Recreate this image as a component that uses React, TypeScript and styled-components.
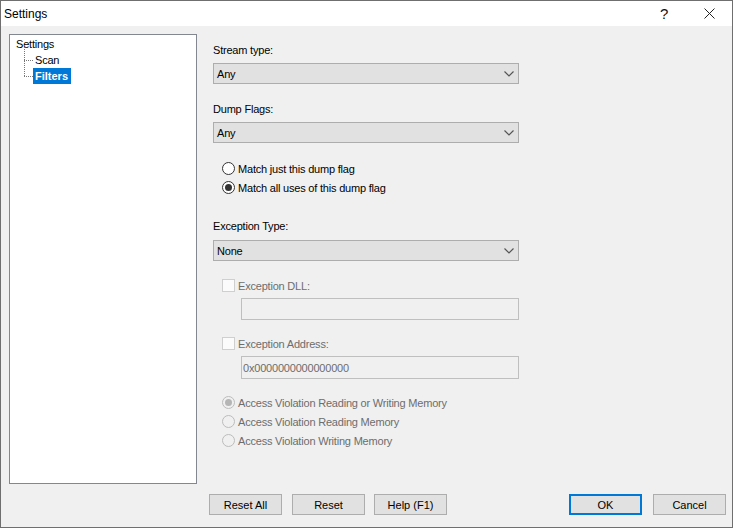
import React from "react";
import styled, { createGlobalStyle } from "styled-components";

const Global = createGlobalStyle`
  html, body { margin: 0; padding: 0; background: #f0f0f0; }
  * { box-sizing: border-box; }
`;

const Window = styled.div`
  width: 733px;
  height: 528px;
  display: flex;
  flex-direction: column;
  background: #f0f0f0;
  border: 1px solid #6f6f6f;
  font-family: "Liberation Sans", Arial, sans-serif;
  font-size: 11px;
  letter-spacing: -0.2px;
  color: #000;
  overflow: hidden;
`;

const TitleBar = styled.div`
  height: 25px;
  background: #fff;
  display: flex;
  align-items: center;
  padding-left: 3px;
  padding-right: 0;
  flex: none;
`;

const Title = styled.div`
  flex: 1;
  font-size: 12px;
  letter-spacing: 0;
`;

const TitleButton = styled.div<{ $shift?: boolean }>`
  width: 46px;
  height: 25px;
  display: flex;
  align-items: center;
  justify-content: center;
  font-size: 15px;
  color: #111;
  padding-left: ${(p) => (p.$shift ? "2px" : "0")};
`;

const Body = styled.div`
  display: flex;
  padding: 8px 0 0 8px;
  height: 458px;
  flex: none;
`;

const Tree = styled.div`
  width: 188px;
  height: 450px;
  flex: none;
  background: #fff;
  border: 1px solid #828790;
  padding: 1px 0 0 6px;
`;

const TreeItem = styled.div`
  height: 16px;
  line-height: 16px;
`;

const TreeChild = styled.div<{ $first?: boolean }>`
  position: relative;
  height: 16px;
  line-height: 16px;
  margin-left: 17px;
  &::before {
    content: "";
    position: absolute;
    left: -9px;
    top: ${(p) => (p.$first ? "-7px" : "-8px")};
    height: ${(p) => (p.$first ? "15px" : "16px")};
    border-left: 1px dotted #777;
  }
  &::after {
    content: "";
    position: absolute;
    left: -9px;
    top: 8px;
    width: 9px;
    border-top: 1px dotted #777;
  }
`;

const TreeLabel = styled.span<{ $selected?: boolean }>`
  display: inline-block;
  height: 16px;
  padding: 0 ${(p) => (p.$selected ? "3px" : "2px")} 0 2px;
  background: ${(p) => (p.$selected ? "#0078d7" : "transparent")};
  color: ${(p) => (p.$selected ? "#fff" : "#000")};
  font-weight: ${(p) => (p.$selected ? 700 : 400)};
  letter-spacing: ${(p) => (p.$selected ? "0" : "-0.2px")};
`;

const Form = styled.div`
  margin-left: 16px;
  width: 306px;
  display: flex;
  flex-direction: column;
`;

const FieldLabel = styled.div<{ $top: number; $bottom?: number }>`
  height: 16px;
  line-height: 16px;
  margin-top: ${(p) => p.$top}px;
  margin-bottom: ${(p) => p.$bottom ?? 5}px;
`;

const Combo = styled.div`
  height: 21px;
  background: #e1e1e1;
  border: 1px solid #adadad;
  display: flex;
  align-items: center;
  justify-content: space-between;
  padding: 0 4px 0 3px;
  flex: none;
`;

const RadioRow = styled.div<{ $disabled?: boolean }>`
  display: flex;
  align-items: center;
  gap: 3px;
  height: 19px;
  margin-left: 9px;
  color: ${(p) => (p.$disabled ? "#6d6d6d" : "#000")};
`;

const RadioCircle = styled.span<{ $checked?: boolean; $disabled?: boolean }>`
  width: 13px;
  height: 13px;
  border-radius: 50%;
  background: ${(p) => (p.$disabled ? "#f0f0f0" : "#fff")};
  border: 1px solid ${(p) => (p.$disabled ? "#bcbcbc" : "#333")};
  display: flex;
  align-items: center;
  justify-content: center;
  flex: none;
  &::after {
    content: "";
    display: ${(p) => (p.$checked ? "block" : "none")};
    width: 7px;
    height: 7px;
    border-radius: 50%;
    background: ${(p) => (p.$disabled ? "#b5b5b5" : "#333")};
  }
`;

const RadioGroup = styled.div<{ $top: number }>`
  margin-top: ${(p) => p.$top}px;
  display: flex;
  flex-direction: column;
`;

const CheckRow = styled.div<{ $top: number }>`
  display: flex;
  align-items: center;
  gap: 3px;
  height: 13px;
  margin-top: ${(p) => p.$top}px;
  margin-left: 9px;
  color: #6d6d6d;
`;

const CheckBox = styled.span`
  width: 13px;
  height: 13px;
  border: 1px solid #cfcfcf;
  background: #fbfbfb;
  flex: none;
`;

const TextBox = styled.div<{ $height: number }>`
  height: ${(p) => p.$height}px;
  margin: 6px 0 0 28px;
  border: 1px solid #bfbfbf;
  background: #f0f0f0;
  color: #6d6d6d;
  display: flex;
  align-items: center;
  padding-left: 1px;
  flex: none;
`;

const Footer = styled.div`
  display: flex;
  align-items: flex-start;
  padding: 10px 6px 0 208px;
`;

const Button = styled.div<{ $primary?: boolean; $gap?: number }>`
  width: 73px;
  height: 21px;
  margin-left: ${(p) => p.$gap ?? 0}px;
  padding-top: 1px;
  background: #e1e1e1;
  border: ${(p) => (p.$primary ? "2px solid #0078d7" : "1px solid #adadad")};
  display: flex;
  align-items: center;
  justify-content: center;
  flex: none;
  letter-spacing: 0;
`;

const Chevron = () => (
  <svg width="10" height="6" viewBox="0 0 10 6" fill="none" stroke="#555" strokeWidth="1.2">
    <path d="M0.5 0.5 L5 5 L9.5 0.5" />
  </svg>
);

const CloseIcon = () => (
  <svg width="11" height="11" viewBox="0 0 11 11" fill="none" stroke="#222" strokeWidth="1">
    <path d="M0.5 0.5 L10.5 10.5 M10.5 0.5 L0.5 10.5" />
  </svg>
);

export default function App() {
  return (
    <>
      <Global />
      <Window>
        <TitleBar>
          <Title>Settings</Title>
          <TitleButton $shift>?</TitleButton>
          <TitleButton>
            <CloseIcon />
          </TitleButton>
        </TitleBar>
        <Body>
          <Tree>
            <TreeItem>Settings</TreeItem>
            <TreeChild $first>
              <TreeLabel>Scan</TreeLabel>
            </TreeChild>
            <TreeChild>
              <TreeLabel $selected>Filters</TreeLabel>
            </TreeChild>
          </Tree>
          <Form>
            <FieldLabel $top={8}>Stream type:</FieldLabel>
            <Combo>
              Any
              <Chevron />
            </Combo>
            <FieldLabel $top={17}>Dump Flags:</FieldLabel>
            <Combo>
              Any
              <Chevron />
            </Combo>
            <RadioGroup $top={16}>
              <RadioRow>
                <RadioCircle />
                Match just this dump flag
              </RadioRow>
              <RadioRow>
                <RadioCircle $checked />
                Match all uses of this dump flag
              </RadioRow>
            </RadioGroup>
            <FieldLabel $top={21} $bottom={6}>Exception Type:</FieldLabel>
            <Combo>
              None
              <Chevron />
            </Combo>
            <CheckRow $top={18}>
              <CheckBox />
              Exception DLL:
            </CheckRow>
            <TextBox $height={22} />
            <CheckRow $top={17}>
              <CheckBox />
              Exception Address:
            </CheckRow>
            <TextBox $height={23}>0x0000000000000000</TextBox>
            <RadioGroup $top={14}>
              <RadioRow $disabled>
                <RadioCircle $disabled $checked />
                Access Violation Reading or Writing Memory
              </RadioRow>
              <RadioRow $disabled>
                <RadioCircle $disabled />
                Access Violation Reading Memory
              </RadioRow>
              <RadioRow $disabled>
                <RadioCircle $disabled />
                Access Violation Writing Memory
              </RadioRow>
            </RadioGroup>
          </Form>
        </Body>
        <Footer>
          <Button>Reset All</Button>
          <Button $gap={10}>Reset</Button>
          <Button $gap={9}>Help (F1)</Button>
          <Button $primary $gap={122}>OK</Button>
          <Button $gap={11}>Cancel</Button>
        </Footer>
      </Window>
    </>
  );
}
